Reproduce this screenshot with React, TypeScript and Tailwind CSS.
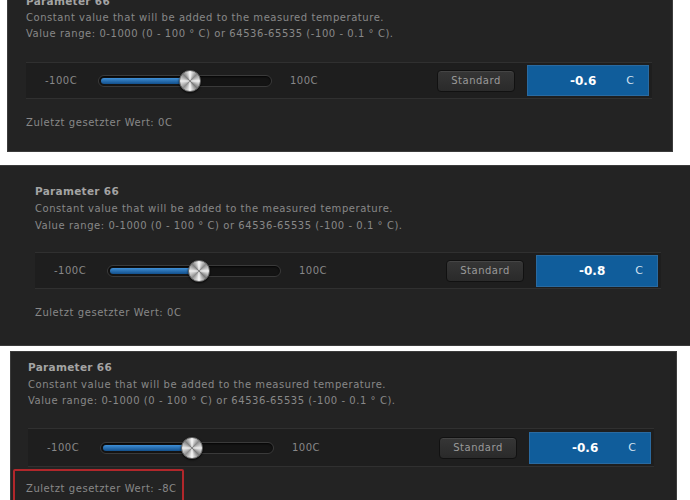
import * as React from 'react'

type PanelProps = {
  outer: string
  pad: string
  titleGap: string
  lineH: string
  boxGap: string
  boxH: string
  blueH: string
  value: string
  last: string
  highlight?: boolean
}

const Slider: React.FC = () => (
  <div className="relative w-[174px] h-[12px] rounded-full bg-[#141414] border border-[#3a3a3a] shadow-[inset_0_1px_2px_rgba(0,0,0,0.8)]">
    <div className="absolute left-[2px] top-[2px] h-[6px] w-[88px] rounded-full bg-gradient-to-b from-[#3f8fd6] to-[#12508c]" />
    <div className="absolute left-[80px] top-[-6px] h-[22px] w-[22px] rounded-full border border-[#666] bg-[conic-gradient(#fafafa,#8a8a8a,#f0f0f0,#7a7a7a,#fafafa,#8f8f8f,#eeeeee,#808080,#fafafa)] shadow-[0_1px_2px_rgba(0,0,0,0.8)]" />
  </div>
)

const Panel: React.FC<PanelProps> = ({
  outer,
  pad,
  titleGap,
  lineH,
  boxGap,
  boxH,
  blueH,
  value,
  last,
  highlight,
}) => (
  <div className={`bg-[#232323] border border-[#3b3b3b] overflow-hidden shrink-0 ${outer}`}>
    <div className={`flex flex-col ${pad}`}>
      <h3 className="text-[10.5px] leading-[16px] font-bold tracking-[0.3px] text-[#a4a4a4]">
        Parameter 66
      </h3>
      <p className={`text-[10px] tracking-[0.55px] text-[#888] ${lineH} ${titleGap}`}>
        Constant value that will be added to the measured temperature.
      </p>
      <p className={`text-[10px] tracking-[0.55px] text-[#888] ${lineH}`}>
        Value range: 0-1000 (0 - 100 ° C) or 64536-65535 (-100 - 0.1 ° C).
      </p>
      <div
        className={`flex items-center w-[626px] bg-[#1e1e1e] border-y border-[#303030] pl-[19px] ${boxGap} ${boxH}`}
      >
        <span className="w-[53px] text-[10px] tracking-[0.5px] text-[#888]">-100C</span>
        <Slider />
        <span className="ml-[18px] w-[147px] text-[10px] tracking-[0.5px] text-[#888]">100C</span>
        <button className="w-[78px] h-[22px] rounded-[4px] border border-[#111] bg-gradient-to-b from-[#363636] to-[#2a2a2a] text-[10px] tracking-[0.5px] text-[#9a9a9a] shadow-[inset_0_1px_0_rgba(255,255,255,0.08)]">
          Standard
        </button>
        <div
          className={`ml-[12px] w-[122px] flex items-center bg-[#105d9b] border border-[#2a6aa0] pl-[42px] pr-[14px] ${blueH}`}
        >
          <span className="text-[12px] font-bold text-white">{value}</span>
          <span className="ml-auto translate-y-[1px] text-[11px] text-[#d4e2ef]">C</span>
        </div>
      </div>
      {highlight ? (
        <div className="mt-[2px] -ml-[15px] w-[171px] h-[40px] border-2 border-[#b1272b] rounded-[2px] pl-[11px] pt-[4px]">
          <span className="text-[10px] leading-[16px] tracking-[0.55px] text-[#888]">{last}</span>
        </div>
      ) : (
        <p className="mt-[16px] text-[10px] leading-[16px] tracking-[0.55px] text-[#888]">{last}</p>
      )}
    </div>
  </div>
)

export default function App() {
  return (
    <div className="h-[500px] w-[690px] overflow-hidden bg-white font-['DejaVu_Sans',sans-serif] flex flex-col">
      <Panel
        outer="ml-[7px] w-[666px] h-[152px] border-t-0"
        pad="-mt-[7px] pl-[18px]"
        titleGap="mt-[1px]"
        lineH="leading-[16px]"
        boxGap="mt-[20px]"
        boxH="h-[37px]"
        blueH="h-[31px]"
        value="-0.6"
        last="Zuletzt gesetzter Wert: 0C"
      />
      <Panel
        outer="mt-[13px] w-[690px] h-[181px] border-x-0"
        pad="pt-[17px] pl-[35px]"
        titleGap="mt-[1px]"
        lineH="leading-[17px]"
        boxGap="mt-[18px]"
        boxH="h-[37px]"
        blueH="h-[32px]"
        value="-0.8"
        last="Zuletzt gesetzter Wert: 0C"
      />
      <Panel
        outer="mt-[5px] ml-[10px] w-[667px] h-[160px]"
        pad="pt-[7px] pl-[17px]"
        titleGap="mt-[2px]"
        lineH="leading-[16px]"
        boxGap="mt-[19px]"
        boxH="h-[39px]"
        blueH="h-[32px]"
        value="-0.6"
        last="Zuletzt gesetzter Wert: -8C"
        highlight
      />
    </div>
  )
}
